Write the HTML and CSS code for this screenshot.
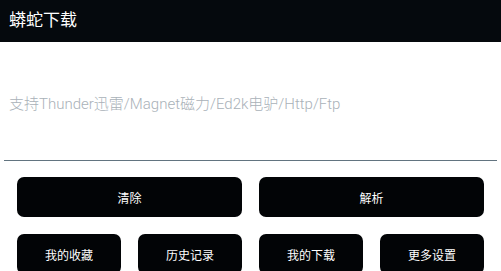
FILE: index.html
```html
<!DOCTYPE html>
<html lang="zh-CN">
  <head>
    <meta charset="UTF-8" />
    <meta name="viewport" content="width=device-width, initial-scale=1.0" />
    <title>蟒蛇下载</title>
    <link rel="stylesheet" href="styles.css">
  </head>
  <body>
    <div class="titlebar">蟒蛇下载</div>
    <div class="eingabe">
      <div class="placeholder">支持Thunder迅雷/Magnet磁力/Ed2k电驴/Http/Ftp</div>
    </div>
    <div class="row-big">
      <button class="btn">清除</button>
      <button class="btn">解析</button>
    </div>
    <div class="row-small">
      <button class="btn">我的收藏</button>
      <button class="btn">历史记录</button>
      <button class="btn">我的下载</button>
      <button class="btn">更多设置</button>
    </div>
  </body>
</html>
```

FILE: styles.css
```css
body {
  margin: 0;
  font-family: Roboto, "Noto Sans CJK SC", sans-serif;
  background: #fff;
  overflow: hidden;
}

.titlebar {
  height: 42px;
  background: #05090d;
  color: #fff;
  font-size: 17px;
  line-height: 40px;
  padding-left: 9px;
}

.eingabe {
  margin: 0 4px;
  height: 119px;
  border-bottom: solid 1px #627480;
  padding: 52px 0 0 5px;
  box-sizing: border-box;
}

.placeholder {
  color: #a9b1b8;
  font-size: 15px;
  line-height: 20px;
  font-weight: 300;
}

.row-big {
  display: grid;
  grid-template-columns: 1fr 1fr;
  gap: 17px;
  padding: 16px 17px 0 17px;
}

.row-small {
  display: grid;
  grid-template-columns: 1fr 1fr 1fr 1fr;
  gap: 17px;
  padding: 17px 17px 0 17px;
}

.btn {
  height: 40px;
  background: #020406;
  color: #fff;
  border: none;
  border-radius: 7px;
  font-family: Roboto, "Noto Sans CJK SC", sans-serif;
  font-size: 12px;
  padding: 0;
}
```
